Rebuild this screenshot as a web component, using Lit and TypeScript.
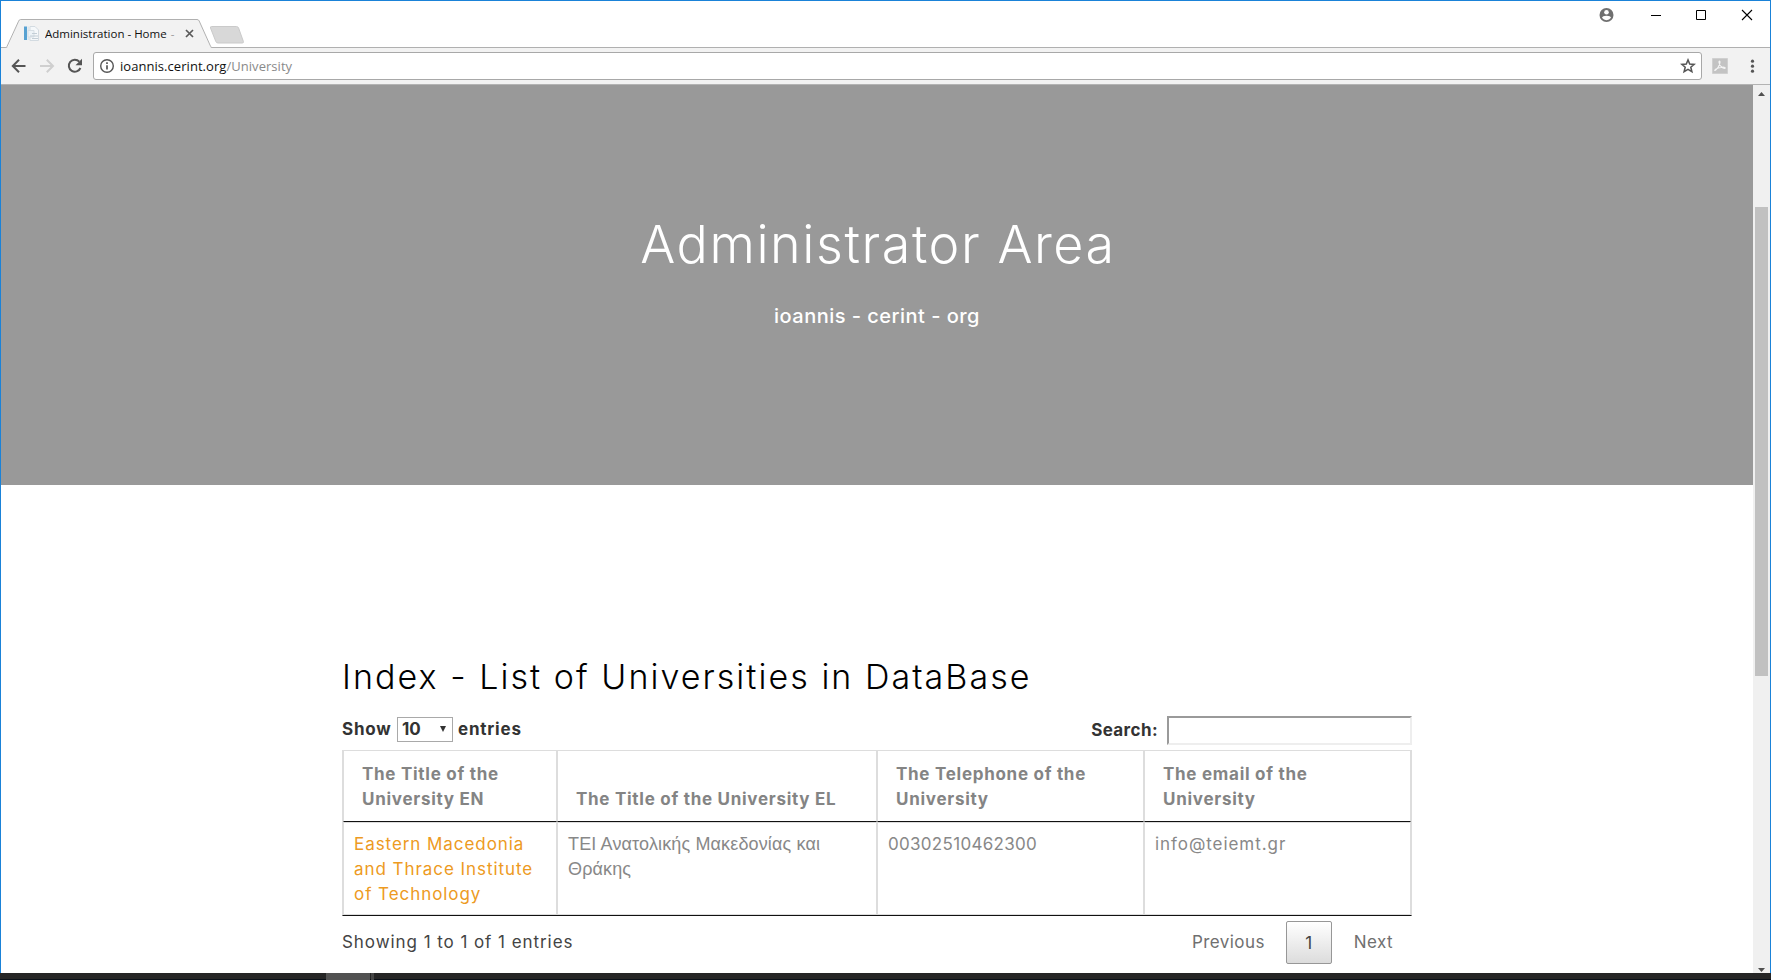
import { LitElement, html, css } from "lit";
import { customElement, property } from "lit/decorators.js";

@customElement("browser-chrome")
export class BrowserChrome extends LitElement {
  @property() heading = "";
  @property() host = "";
  @property() path = "";

  static styles = css`
    :host { display: block; font-family: "Open Sans", "Noto Sans", sans-serif; }
    svg { display: block; flex: none; }
    .strip { display: flex; height: 47px; background: #fff; box-shadow: inset 0 -1px #b0b0b0; }
    .tab { display: grid; width: 208px; height: 30px; margin: 17px 0 0 4px; }
    .tab > * { grid-area: 1 / 1; }
    .label { display: flex; align-items: center; padding: 0 0 0 18px; font-size: 11.5px; color: #111; white-space: nowrap; }
    .label span { width: 140px; margin-left: 5px; overflow: hidden; }
    .label i { font-style: normal; color: #999; margin-left: 1px; }
    .plus { margin: 24px 0 0 -5px; }
    .controls { display: flex; align-items: flex-start; margin: 6px 17px 0 auto; }
    .bar { display: flex; align-items: center; height: 36px; box-sizing: border-box; padding: 0 11px 0 9px; background: #f2f2f2; }
    .nav { display: flex; gap: 10px; }
    .omni { display: flex; align-items: center; flex: 1; height: 28px; box-sizing: border-box; margin: 0 10px 0 9px; padding: 0 5px; border: 1px solid #a8a8a8; border-radius: 3px; background: #fff; font-size: 13px; letter-spacing: 0.05px; color: #111; }
    .url { margin-left: 5px; flex: 1; line-height: 20px; }
    .url span { color: #8a8a8a; }
    .menu { margin-left: 15px; }
  `;

  render() {
    return html`
      <div class="strip">
        <div class="tab">
          <svg width="208" height="30" viewBox="0 0 208 30">
            <path d="M0 30V29.5H1.5Q2.6 29.5 3 28.5L13.6 3.2Q14.2 1.5 15.6 1.5H192Q193.6 1.5 194.2 3L205 28.4Q205.5 29.5 206.6 29.5H208V30Z" fill="#f2f2f2"/>
            <path d="M0 29.5H.8Q1.6 29.5 2 28.5L13.6 3.2Q14.2 1.5 15.6 1.5H192Q193.6 1.5 194.2 3L205.6 28.4Q206 29.5 207 29.5H208" fill="none" stroke="#b0b0b0"/>
          </svg>
          <div class="label">
            <svg width="17" height="17" viewBox="0 0 17 17">
              <path d="M1 1.5H4V15H1Z" fill="#58a2d2"/><path d="M4.5 1.5H6V15H4.5Z" fill="#dbe8f0"/>
              <path d="M7 1.5H12L15.5 5V15.5H7Z" fill="#f5f8fa" stroke="#d3dbe1"/>
              <path d="M5 5.5H11V12H5Z" fill="#edf3f7" stroke="#d7dfe5"/>
              <path d="M7 11H15M9 13.5H15M9 8.5H14" stroke="#c3ced6"/>
            </svg>
            <span>${this.heading} <i>-</i></span>
            <svg width="9" height="9" viewBox="0 0 9 9"><path d="M1 1L8 8M8 1L1 8" stroke="#5a5a5a" stroke-width="1.7"/></svg>
          </div>
        </div>
        <svg class="plus" width="38" height="20" viewBox="0 0 38 20"><path d="M3.5 1.5H28.5Q30 1.5 30.6 3L35.4 16.5Q35.8 18 34.2 18H10Q8.4 18 7.8 16.5L2.5 3Q2 1.5 3.5 1.5Z" fill="#d8d8d8" stroke="#cacaca"/></svg>
        <div class="controls">
          <svg width="154" height="18" viewBox="0 0 154 18">
            <circle cx="7.5" cy="8" r="7" fill="#707070"/>
            <circle cx="7.5" cy="5.3" r="2.3" fill="#fff"/>
            <path d="M3 10.8Q3.4 8.7 7.5 8.7T12 10.8Q10.3 13.2 7.5 13.2T3 10.8Z" fill="#fff"/>
            <path d="M52 8.5H62" stroke="#000"/>
            <path d="M97.5 3.5H106.5V12.5H97.5Z" fill="none" stroke="#000"/>
            <path d="M143 3L153 13M153 3L143 13" stroke="#000" stroke-width="1.1"/>
          </svg>
        </div>
      </div>
      <div class="bar">
        <div class="nav">
          <svg width="18" height="18" viewBox="0 0 18 18"><path d="M15.5 9H3M9 2.8L2.8 9L9 15.2" fill="none" stroke="#555" stroke-width="2"/></svg>
          <svg width="18" height="18" viewBox="0 0 18 18"><path d="M2 9H14.5M8.8 2.8L15 9L8.8 15.2" fill="none" stroke="#cfcfcf" stroke-width="2"/></svg>
          <svg width="18" height="18" viewBox="0 0 18 18"><path d="M14.4 11A6 6 0 1 1 13.3 4.7" fill="none" stroke="#555" stroke-width="2"/><path d="M16 1.8V8.3H9.5Z" fill="#555"/></svg>
        </div>
        <div class="omni">
          <svg width="16" height="16" viewBox="0 0 16 16"><circle cx="8" cy="8" r="6.3" fill="none" stroke="#555" stroke-width="1.4"/><path d="M8 7.2V11.6M8 4.3V6" stroke="#555" stroke-width="1.7"/></svg>
          <div class="url">${this.host}<span>${this.path}</span></div>
          <svg width="16" height="16" viewBox="0 0 16 16"><path d="M8 1.9L9.7 6L14.2 6.4L10.8 9.3L11.9 13.7L8 11.3L4.1 13.7L5.2 9.3L1.8 6.4L6.3 6Z" fill="none" stroke="#555" stroke-width="1.5"/></svg>
        </div>
        <svg width="16" height="16" viewBox="0 0 16 16"><path d="M.5.5H15.5V15.5H.5Z" fill="#c3c3c3" stroke="#d0d0d0"/><path d="M3 12.5C5 11.5 8 7 8 4.3C8 2.3 6.7 2.6 7 4.5C7.5 7.5 10.5 10.7 12.8 10.5C14 10 12.5 9 10.5 9.2C7.5 9.5 4.5 10.5 3.3 11.5C2.7 12.2 2.6 12.6 3 12.5Z" fill="none" stroke="#f4f4f4" stroke-width="1.1"/></svg>
        <svg class="menu" width="16" height="16" viewBox="0 0 16 16" fill="#555"><circle cx="9.5" cy="3.2" r="1.6"/><circle cx="9.5" cy="8.2" r="1.6"/><circle cx="9.5" cy="13.2" r="1.6"/></svg>
      </div>`;
  }
}

interface University { en: string; el: string; phone: string; email: string; }

@customElement("university-list")
export class UniversityList extends LitElement {
  rows: University[] = [
    { en: "Eastern Macedonia and Thrace Institute of Technology", el: "ΤΕΙ Ανατολικής Μακεδονίας και Θράκης", phone: "00302510462300", email: "info@teiemt.gr" },
  ];

  static styles = css`
    :host { display: block; width: 1070px; margin: 0 auto; font: 17px/25px Inter, sans-serif; color: #333; }
    h2 { margin: 0; font-weight: 300; font-size: 34px; line-height: 40px; letter-spacing: 2.04px; color: #000; }
    .tools { display: flex; justify-content: space-between; align-items: flex-start; height: 34px; margin-top: 19px; font-weight: 700; letter-spacing: 0.78px; }
    .length, .search { display: flex; align-items: center; }
    .length { padding-top: 1px; }
    .search { letter-spacing: 0.4px; }
    .select { display: flex; align-items: center; justify-content: space-between; box-sizing: border-box; width: 56px; height: 25px; margin: 0 5px 0 5.5px; padding: 0 6px 0 4px; border: 1px solid #a9a9a9; letter-spacing: 0; }
    .box { box-sizing: border-box; width: 245px; height: 29px; margin-left: 9px; border: 2px solid; border-color: #9a9a9a #eee #eee #9a9a9a; }
    table { width: 1070px; table-layout: fixed; border-collapse: separate; border-spacing: 0; border: 1px solid #ddd; border-bottom-color: #111; color: #888; }
    th, td { border: 0 solid #ddd; border-width: 0 1px; text-align: left; }
    th { padding: 11px 18px 9px; border-bottom: 1px solid #111; vertical-align: bottom; font-weight: 700; letter-spacing: 0.72px; color: #848484; }
    td { padding: 9px 10px 7px; border-top-width: 1px; border-bottom-width: 1px; vertical-align: top; letter-spacing: 0.94px; }
    .w20 { width: 214px; } .w30 { width: 320px; } .w25 { width: 267px; }
    .link { color: #ed9a22; }
    .greek { font-family: "Liberation Sans", sans-serif; font-size: 18px; letter-spacing: 0.14px; }
    .digits { letter-spacing: 0.3px; }
    .foot { display: flex; justify-content: space-between; align-items: center; margin-top: 5px; height: 43px; letter-spacing: 0.94px; color: #444; }
    .pages { display: flex; align-items: center; padding-right: 19px; letter-spacing: 0.42px; color: #707070; }
    .current { box-sizing: border-box; width: 46px; height: 43px; margin: 0 22px 0 21px; border: 1px solid #979797; border-radius: 2px; background: linear-gradient(#fff, #dcdcdc); text-align: center; line-height: 42px; color: #444; }
  `;

  render() {
    return html`
      <h2>Index - List of Universities in DataBase</h2>
      <div class="tools">
        <div class="length">Show
          <div class="select">10<svg width="6" height="7" viewBox="0 0 6 7"><path d="M0 0H6L3 6Z" fill="#333"/></svg></div>
          entries
        </div>
        <div class="search">Search:<div class="box"></div></div>
      </div>
      <table>
        <colgroup><col class="w20"><col class="w30"><col class="w25"><col class="w25"></colgroup>
        <thead><tr>
          <th>The Title of the University EN</th>
          <th>The Title of the University EL</th>
          <th>The Telephone of the University</th>
          <th>The email of the University</th>
        </tr></thead>
        <tbody>${this.rows.map((r) => html`<tr>
          <td class="link">${r.en}</td><td class="greek">${r.el}</td><td class="digits">${r.phone}</td><td>${r.email}</td>
        </tr>`)}</tbody>
      </table>
      <div class="foot">
        <span>Showing 1 to 1 of 1 entries</span>
        <div class="pages">Previous<div class="current">1</div>Next</div>
      </div>`;
  }
}

@customElement("app-root")
export class AppRoot extends LitElement {
  static styles = css`
    :host { display: flex; flex-direction: column; width: 1771px; height: 980px; overflow: hidden; background: #fff; }
    .window { display: flex; flex-direction: column; box-sizing: border-box; height: 973px; border: 1px solid #1a82d8; border-bottom: 0; }
    .view { display: flex; flex: 1; min-height: 0; border-top: 1px solid #b3b3b3; }
    .page { width: 1752px; }
    .hero { box-sizing: border-box; height: 400px; padding-top: 125px; background: #999; text-align: center; color: #fff; font-family: Inter, sans-serif; }
    h1 { margin: 0; padding-left: 2px; font-weight: 300; font-size: 52px; line-height: 70px; letter-spacing: 1.57px; }
    .sub { margin: 23px 0 0; font-weight: 500; font-size: 20px; line-height: 26px; letter-spacing: 0.48px; }
    .list { margin-top: 172px; }
    .scroll { display: flex; flex-direction: column; align-items: center; width: 17px; background: #f0f0f0; }
    .up { margin-top: 7px; }
    .thumb { width: 13px; height: 469px; margin-top: 111px; background: #c1c1c1; }
    .down { margin: auto 0 1px; }
    .task { display: flex; height: 7px; padding-left: 326px; background: #262626; box-shadow: inset 0 -1px #0a1018; }
    .app { width: 44px; background: #525252; }
    .more { width: 3px; margin-left: 1px; background: #464646; }
  `;

  render() {
    return html`
      <div class="window">
        <browser-chrome heading="Administration - Home" host="ioannis.cerint.org" path="/University"></browser-chrome>
        <div class="view">
          <div class="page">
            <div class="hero">
              <h1>Administrator Area</h1>
              <p class="sub">ioannis - cerint - org</p>
            </div>
            <university-list class="list"></university-list>
          </div>
          <div class="scroll">
            <svg class="up" width="7" height="4" viewBox="0 0 7 4"><path d="M0 4L3.5 0L7 4Z" fill="#505050"/></svg>
            <div class="thumb"></div>
            <svg class="down" width="7" height="4" viewBox="0 0 7 4"><path d="M0 0L3.5 4L7 0Z" fill="#505050"/></svg>
          </div>
        </div>
      </div>
      <div class="task"><div class="app"></div><div class="more"></div></div>`;
  }
}
